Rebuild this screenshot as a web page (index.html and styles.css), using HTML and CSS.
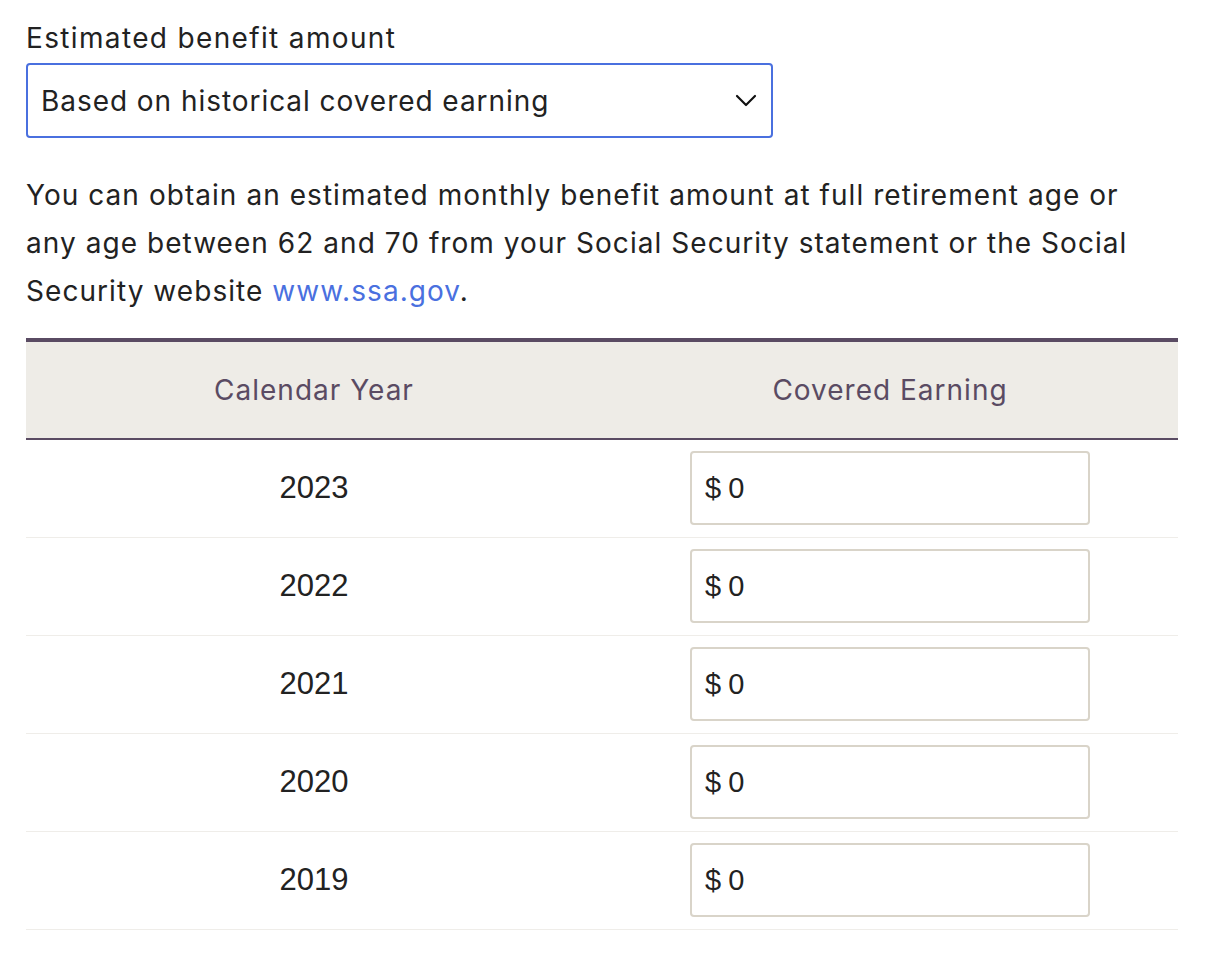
FILE: index.html
```html
<!DOCTYPE html>
<html>
<head>
<meta charset="utf-8">
<link rel="stylesheet" href="styles.css">
</head>
<body>
<div class="page">
  <label class="field-label">Estimated benefit amount</label>
  <div class="select">
    <span class="select-value">Based on historical covered earning</span>
    <svg class="chevron" width="22" height="14" viewBox="0 0 22 14"><path d="M2 2 L11 11 L20 2" fill="none" stroke="#111" stroke-width="2.2" stroke-linecap="round" stroke-linejoin="round"/></svg>
  </div>
  <p class="info">You can obtain an estimated monthly benefit amount at full retirement age or any age between 62 and 70 from your Social Security statement or the Social Security website <a class="link" href="#">www.ssa.gov</a>.</p>
  <div class="table">
    <div class="thead">
      <div class="th">Calendar Year</div>
      <div class="th">Covered Earning</div>
    </div>
    <div class="row"><div class="year">2023</div><div class="cell"><div class="input"><span class="cur">$</span>0</div></div></div>
    <div class="row"><div class="year">2022</div><div class="cell"><div class="input"><span class="cur">$</span>0</div></div></div>
    <div class="row"><div class="year">2021</div><div class="cell"><div class="input"><span class="cur">$</span>0</div></div></div>
    <div class="row"><div class="year">2020</div><div class="cell"><div class="input"><span class="cur">$</span>0</div></div></div>
    <div class="row"><div class="year">2019</div><div class="cell"><div class="input"><span class="cur">$</span>0</div></div></div>
  </div>
</div>
</body>
</html>
```
FILE: styles.css
```css
html, body {
  margin: 0;
  padding: 0;
  background: #fff;
}
.page {
  padding: 20px 0 0 26px;
  width: 1152px;
  font-family: "Inter", "Noto Sans", sans-serif;
  color: #222;
}
.field-label {
  display: block;
  font-size: 28px;
  line-height: 36px;
  letter-spacing: 1.35px;
  color: #222;
}
.select {
  margin-top: 7px;
  width: 747px;
  height: 75px;
  box-sizing: border-box;
  border: 2px solid #4a70df;
  border-radius: 4px;
  display: flex;
  align-items: center;
  justify-content: space-between;
  padding: 0 14px 0 13px;
}
.select-value {
  font-size: 28px;
  letter-spacing: 0.95px;
  color: #222;
}
.chevron {
  display: block;
}
.info {
  margin: 33px 0 0 0;
  font-size: 28px;
  line-height: 48px;
  letter-spacing: 1.05px;
  color: #222;
}
.link {
  color: #4a70df;
  text-decoration: none;
}
.table {
  margin-top: 23px;
  width: 1152px;
}
.thead {
  display: grid;
  grid-template-columns: 1fr 1fr;
  background: #eeece7;
  border-top: 4px solid #5a4b63;
  border-bottom: 2px solid #5a4b63;
  height: 96px;
}
.th {
  display: flex;
  align-items: center;
  justify-content: center;
  font-size: 28px;
  color: #5a4b63;
  letter-spacing: 1px;
}
.row {
  display: grid;
  grid-template-columns: 1fr 1fr;
  border-bottom: 1px solid #efede9;
  padding: 11px 0 12px;
}
.year {
  display: flex;
  align-items: center;
  justify-content: center;
  font-family: "Liberation Sans", Arial, sans-serif;
  font-size: 31px;
  color: #222;
}
.cell {
  display: flex;
  justify-content: center;
}
.input {
  width: 400px;
  height: 74px;
  box-sizing: border-box;
  border: 2px solid #d9d4c9;
  border-radius: 4px;
  display: flex;
  align-items: center;
  padding-left: 13px;
  font-family: "Liberation Sans", Arial, sans-serif;
  font-size: 29px;
  color: #222;
}
.cur {
  margin-right: 7px;
}
```
